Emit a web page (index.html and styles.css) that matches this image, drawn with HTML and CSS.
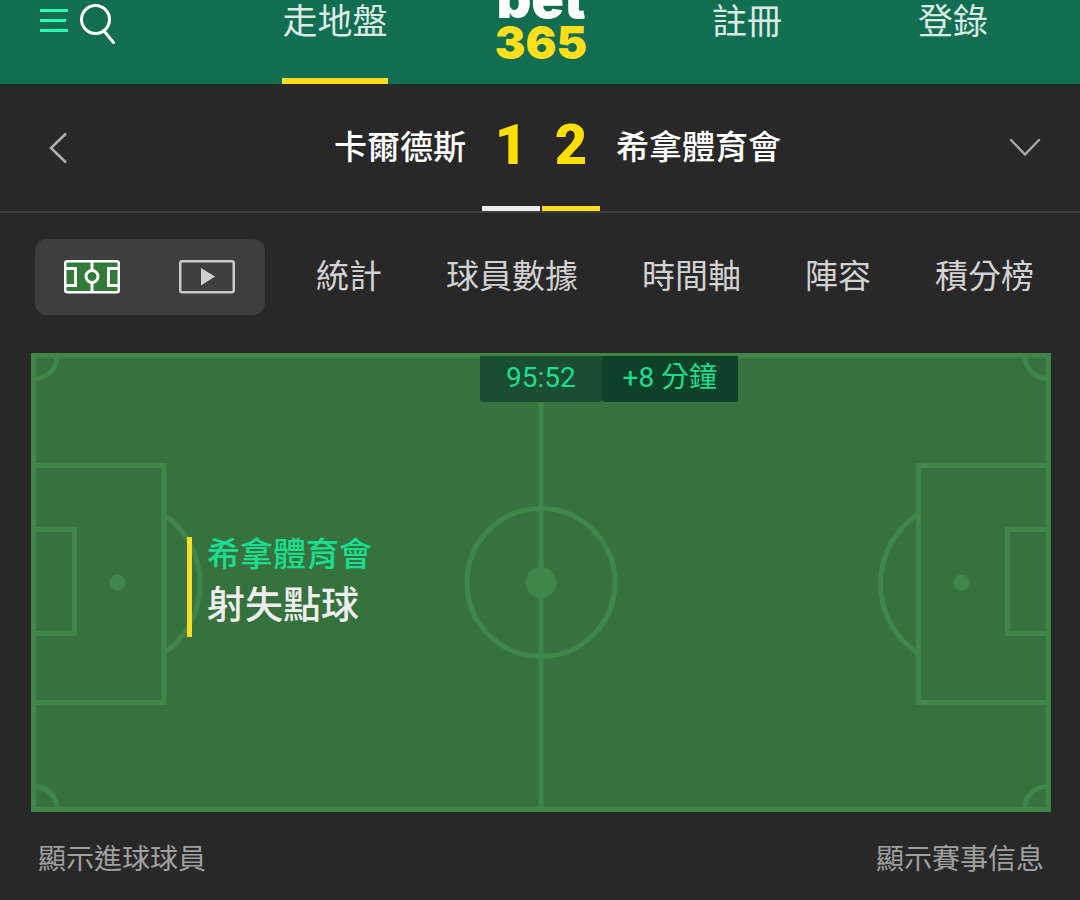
FILE: index.html
```html
<!DOCTYPE html>
<html lang="zh-Hant">
<head>
<meta charset="utf-8">
<meta name="viewport" content="width=device-width, initial-scale=1">
<title>bet365</title>
<link rel="stylesheet" href="styles.css">
</head>
<body>
<header class="site-header">
  <div class="tools">
    <button class="icon-button" aria-label="選單">
      <svg width="28" height="26" viewBox="0 0 28 26"><path d="M0 2.500h28M0 12.500h26M0 22.500h28" fill="none" stroke="#2bfcb3" stroke-width="3"/></svg>
    </button>
    <button class="icon-button" aria-label="搜尋">
      <svg width="36" height="40" viewBox="0 0 36 40"><g fill="none" stroke="#fff" stroke-width="3"><circle cx="15.500" cy="15.500" r="14"/><path d="M24 27l9.500 11.500" stroke-linecap="round"/></g></svg>
    </button>
  </div>
  <a class="nav-link nav-link-active" href="#">走地盤</a>
  <a class="logo" href="#"><span class="logo-word">bet</span><span class="logo-number">365</span></a>
  <a class="nav-link" href="#">註冊</a>
  <a class="nav-link" href="#">登錄</a>
</header>
<main>
  <section class="scoreboard">
    <div class="side side-home">
      <button class="icon-button" aria-label="返回">
        <svg width="18" height="32" viewBox="0 0 18 32"><path d="M17 1.500L2 16l15 14.500" fill="none" stroke="#b0b0b0" stroke-width="2.500"/></svg>
      </button>
      <h2 class="team">卡爾德斯</h2>
    </div>
    <div class="scores">
      <span class="score score-home">1</span>
      <span class="score score-away">2</span>
    </div>
    <div class="side">
      <h2 class="team">希拿體育會</h2>
      <button class="icon-button" aria-label="更多賽事">
        <svg width="32" height="20" viewBox="0 0 32 20"><path d="M2 2l14 14.500L30 2" fill="none" stroke="#a5a5a5" stroke-width="2.500" stroke-linecap="round"/></svg>
      </button>
    </div>
  </section>
  <nav class="tabs">
    <div class="view-switch">
      <button class="icon-button" aria-label="球場">
        <svg width="58" height="34" viewBox="0 0 58 34"><rect x="1.250" y="1.250" width="53.500" height="31" rx="2" fill="#327a37" stroke="#fff" stroke-width="2.500"/><g fill="none" stroke="#fff" stroke-width="3"><path d="M28 2v8M28 23v9M2 8.500h9.500v17H2M54 8.500h-9.500v17H54"/><circle cx="28" cy="16.500" r="6"/></g></svg>
      </button>
      <button class="icon-button" aria-label="影片">
        <svg width="58" height="34" viewBox="0 0 58 34"><rect x="1.250" y="1.250" width="53.500" height="31" rx="2" fill="none" stroke="#c8c8c8" stroke-width="2.500"/><path d="M22 8v17.500L36 16.500z" fill="#d0d0d0"/></svg>
      </button>
    </div>
    <div class="tab-list">
      <a class="tab" href="#">統計</a>
      <a class="tab" href="#">球員數據</a>
      <a class="tab" href="#">時間軸</a>
      <a class="tab" href="#">陣容</a>
      <a class="tab" href="#">積分榜</a>
    </div>
  </nav>
  <section class="pitch">
    <svg class="pitch-lines" viewBox="0 0 1020 459" aria-hidden="true">
      <rect width="1020" height="459" fill="#36723d"/>
      <g fill="none" stroke="#3f8648" stroke-width="5">
        <rect x="2.500" y="2.500" width="1015" height="454"/>
        <path d="M510 3v453M3 112.500h130v237H3M3 176.500h40.500v104H3M1017 112.500H887.500v237H1017M1017 176.500H976.500v104H1017"/>
        <circle cx="510" cy="229.500" r="74"/>
        <path d="M134 162A85 85 0 0 1 134 299.500M886 162A83 83 0 0 0 886 299.500"/>
        <path d="M26 3A22 22 0 0 1 3 25.500M994 3A22 22 0 0 0 1017 25.500M3 433.500A22 22 0 0 1 26 456M1017 433.500A22 22 0 0 0 994 456"/>
      </g>
      <g fill="#3f8648"><circle cx="510" cy="229.500" r="15.500"/><circle cx="86.500" cy="229.500" r="8"/><circle cx="930.500" cy="229.500" r="8"/></g>
    </svg>
    <div class="clock"><span class="clock-time">95:52</span><span class="clock-added">+8 分鐘</span></div>
    <div class="event">
      <span class="event-team">希拿體育會</span>
      <strong class="event-title">射失點球</strong>
    </div>
  </section>
  <div class="footer-links">
    <button class="text-button">顯示進球球員</button>
    <button class="text-button">顯示賽事信息</button>
  </div>
</main>
</body>
</html>
```

FILE: styles.css
```css
* { box-sizing: border-box; }

body {
  margin: 0;
  background: #282828;
  color: #fff;
  font-family: Roboto, "Noto Sans CJK TC", sans-serif;
}

a { color: inherit; text-decoration: none; }
svg { display: block; }

button {
  padding: 0;
  border: 0;
  background: none;
  color: inherit;
  font: inherit;
  cursor: pointer;
}

.site-header {
  display: grid;
  grid-template-columns: repeat(5, 1fr);
  justify-items: center;
  height: 84px;
  padding: 0 24px 0 26px;
  overflow: hidden;
  background: #126e51;
}

.tools {
  display: flex;
  justify-self: start;
  align-items: flex-start;
  gap: 12px;
  padding: 4px 0 0 14px;
}

.tools .icon-button:first-child { padding-top: 4px; }

.nav-link {
  height: 84px;
  color: #dceae5;
  font-size: 35px;
  font-weight: 400;
  line-height: 46px;
}

.nav-link-active { border-bottom: 6px solid #ffdf1b; }

.logo {
  display: flex;
  flex-direction: column;
  align-items: center;
  justify-content: flex-end;
  height: 84px;
  padding-bottom: 22px;
  font-family: Inter, sans-serif;
  font-size: 46px;
  font-weight: 900;
  line-height: 40px;
}

.logo-word { font-size: 54px; line-height: 46px; }
.logo-number { color: #ffdf1b; }

.scoreboard {
  display: grid;
  grid-template-columns: 1fr auto 1fr;
  gap: 16px;
  padding: 0 39px 0 41px;
  border-bottom: 2px solid #3f3f3f;
}

.side {
  display: flex;
  align-items: center;
  justify-content: space-between;
}

.side-home { padding-left: 8px; }

.team {
  margin: 0;
  font-size: 33px;
  font-weight: 500;
  line-height: 48px;
}

.scores { display: flex; gap: 2px; }

.score {
  width: 58px;
  border-bottom: 5px solid #eee;
  color: #ffdf00;
  font-size: 56px;
  font-weight: 900;
  line-height: 122px;
  text-align: center;
}

.score-away { border-color: #ffdf1b; }

.tabs {
  display: flex;
  align-items: center;
  justify-content: space-between;
  padding: 26px 46px 38px 35px;
}

.view-switch {
  display: flex;
  align-items: center;
  justify-content: space-around;
  width: 230px;
  height: 76px;
  border-radius: 12px;
  background: #3e3e3e;
}

.tab-list { display: flex; gap: 64px; }

.tab {
  color: #d2d2d2;
  font-size: 33px;
  line-height: 48px;
}

.pitch { position: relative; margin: 0 29px 0 31px; }
.pitch-lines { width: 100%; }

.clock {
  position: absolute;
  top: 3px;
  left: 44%;
  display: flex;
  color: #1fdd8e;
  font-size: 28px;
  line-height: 44px;
  text-align: center;
}

.clock span { height: 46px; border-radius: 0 0 3px 3px; }
.clock-time { width: 122px; background: #194f30; }
.clock-added { width: 136px; background: #0d4229; }

.event {
  position: absolute;
  top: 40%;
  left: 156px;
  display: flex;
  flex-direction: column;
  padding-left: 15px;
  border-left: 5px solid #f8df25;
  font-weight: 500;
}

.event-team { color: #1cdc90; font-size: 33px; line-height: 36px; }
.event-title { font-size: 38px; font-weight: 500; line-height: 64px; color: #eee; }

.footer-links {
  display: flex;
  justify-content: space-between;
  padding: 28px 36px 20px 38px;
}

.text-button {
  color: #a0a0a0;
  font-size: 28px;
  line-height: 40px;
}
```
